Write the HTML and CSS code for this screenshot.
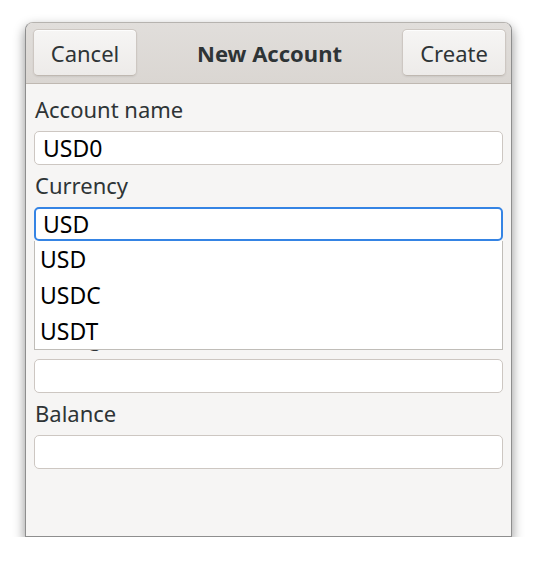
FILE: index.html
```html
<!DOCTYPE html>
<html>
<head>
<meta charset="utf-8">
<link rel="stylesheet" href="styles.css">
</head>
<body>
<div class="window">
  <header class="headerbar">
    <button class="btn">Cancel</button>
    <div class="title">New Account</div>
    <button class="btn">Create</button>
  </header>
  <main class="content">
    <div class="field">
      <div class="label">Account name</div>
      <div class="entry">USD0</div>
    </div>
    <div class="field combo">
      <div class="label">Currency</div>
      <div class="entry focused">USD</div>
      <ul class="popup">
        <li>USD</li>
        <li>USDC</li>
        <li>USDT</li>
      </ul>
    </div>
    <div class="field">
      <div class="label">&nbsp;</div>
      <div class="entry"></div>
    </div>
    <div class="field">
      <div class="label">Change</div>
      <div class="entry"></div>
    </div>
    <div class="field">
      <div class="label">Balance</div>
      <div class="entry"></div>
    </div>
  </main>
</div>
</body>
</html>
```
FILE: styles.css
```css
html, body {
  margin: 0;
  padding: 0;
  background: #ffffff;
}
body {
  font-family: "Noto Sans", "DejaVu Sans", sans-serif;
  color: #2e3436;
  padding: 22px 0 0 25px;
}
.window {
  width: 485px;
  height: 513px;
  border: 1px solid #8e8e8e;
  border-top-color: #b6b3af;
  border-radius: 8px 8px 0 0;
  background: #f6f5f4;
  box-shadow: 0 5px 11px 1px rgba(0,0,0,0.38);
  display: flex;
  flex-direction: column;
}
.headerbar {
  height: 61px;
  box-sizing: border-box;
  padding: 6px 5px 7px 7px;
  display: flex;
  align-items: stretch;
  justify-content: space-between;
  background: linear-gradient(to top, #dad6d2, #e1dedb);
  border-bottom: 1px solid #bfb8b1;
  border-radius: 7px 7px 0 0;
}
.btn {
  width: 104px;
  box-sizing: border-box;
  font-family: inherit;
  font-size: 22px;
  color: #2e3436;
  border: 1px solid #cdc7c2;
  border-bottom-color: #bfb8b1;
  border-radius: 5px;
  background: linear-gradient(to top, #edebe9, #f6f5f4);
  box-shadow: inset 0 1px rgba(255,255,255,0.8), 0 1px 2px rgba(0,0,0,0.07);
  padding: 0;
}
.title {
  font-weight: bold;
  font-size: 22px;
  align-self: center;
}
.content {
  padding: 10px 8px 0 8px;
  display: flex;
  flex-direction: column;
  gap: 5px;
}
.field {
  display: flex;
  flex-direction: column;
}
.combo {
  position: relative;
  z-index: 2;
}
.label {
  font-size: 22px;
  line-height: 31px;
  height: 31px;
  padding: 0 0 6px 1px;
}
.entry {
  height: 34px;
  box-sizing: border-box;
  background: #ffffff;
  border: 1px solid #cdc7c2;
  border-radius: 5px;
  font-size: 23px;
  line-height: 32px;
  color: #000000;
  padding: 0 8px;
}
.entry.focused {
  border: 2px solid #3584e4;
  line-height: 30px;
  padding: 0 7px;
}
.popup {
  position: absolute;
  left: 0;
  right: 0;
  top: 71px;
  margin: 0;
  padding: 0;
  list-style: none;
  background: #ffffff;
  border: 1px solid #c0bdb8;
  border-top: none;
}
.popup li {
  height: 36px;
  line-height: 36px;
  font-size: 23px;
  color: #000000;
  padding-left: 5px;
}
```
